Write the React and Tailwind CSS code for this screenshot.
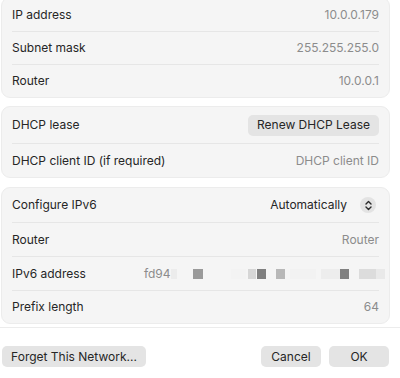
import React from "react";

const font = { fontFamily: "Inter, 'Noto Sans', sans-serif" };

const Row = ({ label, children, first, h = "h-[34px]" }) => (
  <div
    className={`mx-[10px] flex items-center justify-between gap-2 ${
      first ? "" : "border-t border-[#e6e6e6]"
    } ${h}`}
  >
    <span className="shrink-0 whitespace-nowrap text-[#262626]">{label}</span>
    {children}
  </div>
);

const Value = ({ children }) => <span className="whitespace-nowrap text-[#8c8c8c]">{children}</span>;

const Card = ({ children, className = "" }) => (
  <div className={`rounded-[9px] border border-[#ececec] bg-[#f5f5f5] ${className}`}>{children}</div>
);

// blurred-out part of the address
const Redacted = () => {
  const blocks = [
    [0, 6, "#ececec"],
    [22, 10, "#9a9a9a"],
    [60, 15, "#f3f3f3"],
    [77, 8, "#d6d6d6"],
    [86, 9, "#7f7f7f"],
    [105, 9, "#b8b8b8"],
    [119, 26, "#f2f2f2"],
    [150, 19, "#ededed"],
    [169, 9, "#818181"],
    [188, 17, "#dcdcdc"],
    [205, 9, "#e9e9e9"],
  ];
  return (
    <svg width="214" height="10" viewBox="0 0 214 10" className="shrink-0">
      {blocks.map(([x, w, c], i) => (
        <rect key={i} x={x} y="0" width={w} height="10" fill={c} />
      ))}
    </svg>
  );
};

const Stepper = () => (
  <span className="flex h-[16px] w-[16px] items-center justify-center rounded-full bg-[#e3e3e3]">
    <svg width="9" height="11" viewBox="0 0 9 11" fill="none" stroke="#2a2a2a" strokeWidth="1.4" strokeLinecap="round" strokeLinejoin="round">
      <path d="M2 4 L4.5 1.6 L7 4" />
      <path d="M2 7 L4.5 9.4 L7 7" />
    </svg>
  </span>
);

const Btn = ({ children, className = "" }) => (
  <button className={`h-[21px] whitespace-nowrap rounded-[5px] bg-[#e4e4e4] text-[#262626] ${className}`}>{children}</button>
);

export default function App() {
  return (
    <div style={font} className="flex h-[378px] w-[400px] flex-col overflow-hidden bg-white text-[12px]">
      <div className="-mt-[3px] flex flex-col gap-2 pl-[1px] pr-[10px]">
        <Card>
          <Row label="IP address" first h="h-[33px]">
            <Value>10.0.0.179</Value>
          </Row>
          <Row label="Subnet mask" h="h-[33px]">
            <Value>255.255.255.0</Value>
          </Row>
          <Row label="Router" h="h-[33px]">
            <Value>10.0.0.1</Value>
          </Row>
        </Card>
        <Card>
          <Row label="DHCP lease" first h="h-[36px]">
            <Btn className="w-[131px]">Renew DHCP Lease</Btn>
          </Row>
          <Row label="DHCP client ID (if required)">
            <Value>DHCP client ID</Value>
          </Row>
        </Card>
        <Card className="mt-[1px]">
          <Row label="Configure IPv6" first>
            <span className="mr-[3px] flex items-center gap-[13px] whitespace-nowrap text-[#262626]">
              Automatically
              <Stepper />
            </span>
          </Row>
          <Row label="Router">
            <Value>Router</Value>
          </Row>
          <Row label="IPv6 address">
            <span className="flex flex-1 items-center pl-[50px] text-[#8c8c8c]">
              <span>fd94</span>
              <Redacted />
            </span>
          </Row>
          <Row label="Prefix length" h="h-[33px]">
            <Value>64</Value>
          </Row>
        </Card>
      </div>
      <div className="mt-[3px] border-t border-[#ececec]" />
      <div className="flex items-center justify-between pl-[2px] pr-[11px] pt-[18px]">
        <Btn className="w-[144px]">Forget This Network...</Btn>
        <div className="flex gap-2">
          <Btn className="w-[60px]">Cancel</Btn>
          <Btn className="w-[60px]">OK</Btn>
        </div>
      </div>
    </div>
  );
}
